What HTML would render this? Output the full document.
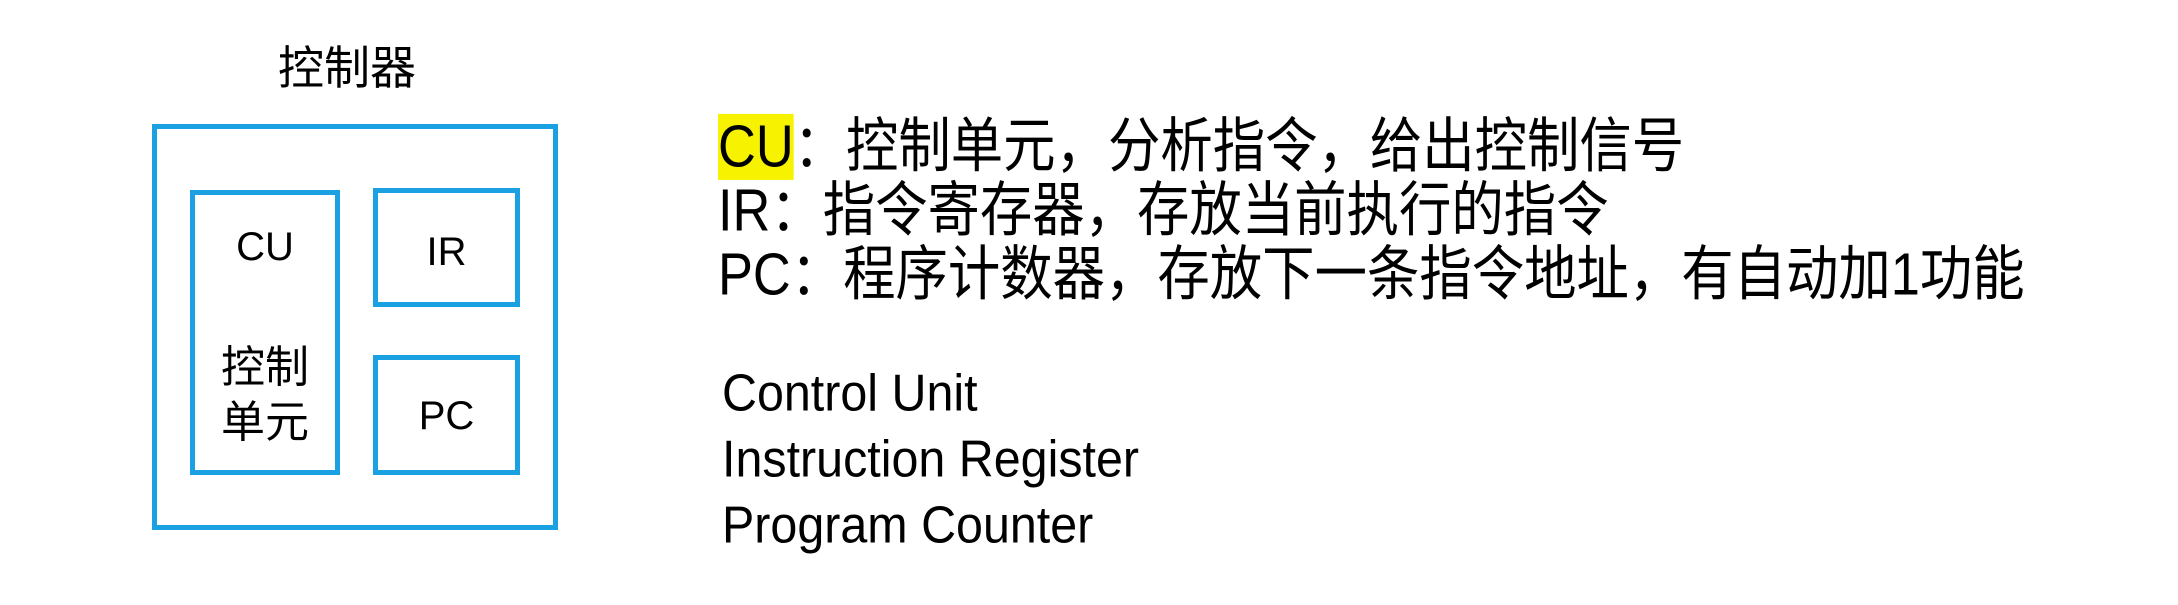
<!DOCTYPE html>
<html><head><meta charset="utf-8"><style>
body{margin:0;width:2178px;height:605px;background:#fff;position:relative;overflow:hidden;font-family:"Liberation Sans","Noto Sans CJK SC",sans-serif;color:#000}
.b{position:absolute;border:5px solid #1ba1e2;box-sizing:border-box}
.t{position:absolute;white-space:nowrap}
.c{position:absolute;text-align:center;font-family:"Liberation Sans","Noto Sans CJK SC",sans-serif}
</style></head><body>
<div class="t" style="left:278px;top:40px;font-size:46px;line-height:56px">控制器</div>
<div class="b" style="left:152px;top:124px;width:406px;height:406px"></div>
<div class="b" style="left:190px;top:190px;width:150px;height:285px"></div>
<div class="b" style="left:373px;top:188px;width:147px;height:119px"></div>
<div class="b" style="left:373px;top:355px;width:147px;height:120px"></div>
<div class="c" style="left:190px;width:150px;top:225px;font-size:40px;line-height:44px">CU</div>
<div class="c" style="left:190px;width:150px;top:340px;font-size:44px;line-height:55px">控制<br>单元</div>
<div class="c" style="left:373px;width:147px;top:230px;font-size:40px;line-height:44px">IR</div>
<div class="c" style="left:373px;width:147px;top:394px;font-size:40px;line-height:44px">PC</div>
<div class="t" style="left:718px;top:115px;font-size:54px;line-height:58px;transform:scale(0.97,1.1);transform-origin:0 0"><span style="background:#f7f200">CU</span>：控制单元，分析指令，给出控制信号<br>IR：指令寄存器，存放当前执行的指令<br>PC：程序计数器，存放下一条指令地址，有自动加1功能</div>
<div class="t" style="left:722px;top:360px;font-size:47px;line-height:60px;transform:scale(1.03,1.1);transform-origin:0 0">Control Unit<br>Instruction Register<br>Program Counter</div>
</body></html>
